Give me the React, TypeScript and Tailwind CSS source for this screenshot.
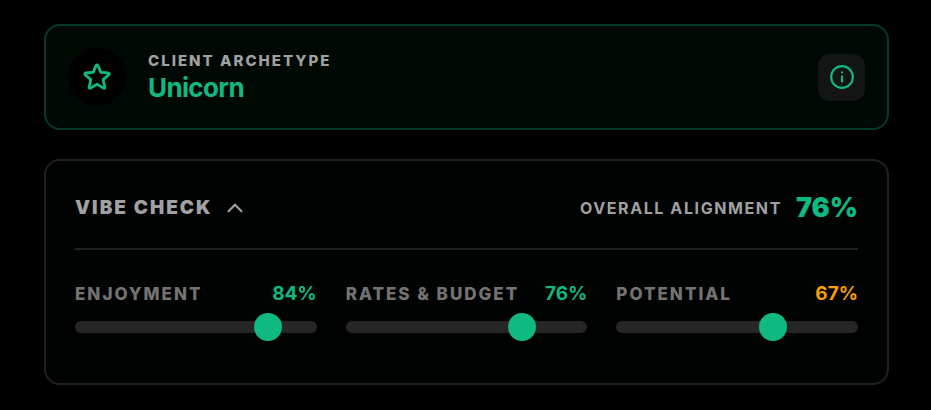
import { useState } from 'react';
import { ChevronUp } from 'lucide-react';
import { PiStarBold } from 'react-icons/pi';
import { clsx } from 'clsx';

interface Vibe {
  id: string;
  label: string;
  value: number;
}

const initialVibes: Vibe[] = [
  { id: 'enjoyment', label: 'Enjoyment', value: 84 },
  { id: 'rates', label: 'Rates & Budget', value: 76 },
  { id: 'potential', label: 'Potential', value: 67 },
];

function InfoIcon() {
  return (
    <svg
      viewBox="0 0 24 24"
      className="size-[26px]"
      fill="none"
      stroke="currentColor"
      strokeLinecap="round"
      aria-hidden
    >
      <circle cx="12" cy="12" r="10" strokeWidth="2" />
      <path d="M12 11.4v4.8M12 7.8v.01" strokeWidth="2" />
    </svg>
  );
}

/* ── Archetype banner ──────────────────────────────────────────────────────── */

function ArchetypeCard() {
  return (
    <section className="flex items-center justify-between rounded-2xl border-2 border-[#043a2a] bg-[#000804] px-[22px] py-[22px]">
      <div className="flex items-center gap-[22px]">
        <span className="flex size-[58px] items-center justify-center rounded-full bg-black text-[#10b981]">
          <PiStarBold size={30} aria-hidden />
        </span>
        <div className="pt-px">
          <p className="text-[15px] leading-5 font-extrabold tracking-[2px] text-[#a1a1a1] uppercase">
            Client Archetype
          </p>
          <h1 className="text-[26px] leading-[34px] font-bold tracking-tight text-[#10b981]">Unicorn</h1>
        </div>
      </div>
      <button
        type="button"
        aria-label="About this archetype"
        className="flex size-[47px] items-center justify-center rounded-xl bg-[#131514] text-[#10b981]"
      >
        <InfoIcon />
      </button>
    </section>
  );
}

/* ── Slider with its label and score ───────────────────────────────────────── */

function VibeSlider({ vibe, onChange }: { vibe: Vibe; onChange: (value: number) => void }) {
  return (
    <div>
      <div className="flex items-center justify-between leading-6">
        <label
          htmlFor={vibe.id}
          className="text-[17px] leading-6 font-extrabold tracking-[2px] whitespace-nowrap text-[#737373] uppercase"
        >
          {vibe.label}
        </label>
        <output
          htmlFor={vibe.id}
          className={clsx(
            'text-[19px] leading-6 font-bold',
            vibe.value >= 70 ? 'text-[#10b981]' : 'text-[#f59e0b]',
          )}
        >
          {vibe.value}%
        </output>
      </div>
      <input
        id={vibe.id}
        type="range"
        min={0}
        max={100}
        value={vibe.value}
        onChange={(e) => onChange(Number(e.target.value))}
        className="mt-[15px] block h-3 w-full cursor-pointer appearance-none rounded-full bg-[#262626] [&::-webkit-slider-thumb]:size-7 [&::-webkit-slider-thumb]:appearance-none [&::-webkit-slider-thumb]:rounded-full [&::-webkit-slider-thumb]:bg-[#10b981]"
      />
    </div>
  );
}

/* ── Vibe check panel ──────────────────────────────────────────────────────── */

function VibeCheckCard() {
  const [vibes, setVibes] = useState(initialVibes);
  const [open, setOpen] = useState(true);
  const overall = Math.round(vibes.reduce((sum, v) => sum + v.value, 0) / vibes.length);

  const update = (id: string, value: number) =>
    setVibes((prev) => prev.map((v) => (v.id === id ? { ...v, value } : v)));

  return (
    <section className="rounded-2xl border-2 border-[#1f2120] bg-[#010302] px-[29px] pt-[29px] pb-[50px]">
      <header className="flex items-center justify-between border-b-2 border-[#1f2221] pb-[22px]">
        <button
          type="button"
          aria-expanded={open}
          onClick={() => setOpen(!open)}
          className="flex items-center gap-2.5 text-[#a1a1a1]"
        >
          <span className="text-[19px] leading-9 font-black tracking-[2px] uppercase">Vibe Check</span>
          <ChevronUp size={26} strokeWidth={2} aria-hidden className={clsx(!open && 'rotate-180')} />
        </button>
        <p className="flex items-center gap-3.5">
          <span className="text-base leading-9 font-bold tracking-widest text-[#a1a1a1] uppercase">
            Overall Alignment
          </span>
          <span className="text-[27px] leading-9 font-black text-[#10b981]">{overall}%</span>
        </p>
      </header>
      {open && (
        <div className="mt-8 grid grid-cols-3 gap-[29px]">
          {vibes.map((vibe) => (
            <VibeSlider key={vibe.id} vibe={vibe} onChange={(value) => update(vibe.id, value)} />
          ))}
        </div>
      )}
    </section>
  );
}

export default function App() {
  return (
    <main className="flex min-h-screen flex-col gap-[29px] bg-black py-6 pr-[42px] pl-11 font-['Inter',sans-serif]">
      <ArchetypeCard />
      <VibeCheckCard />
    </main>
  );
}
